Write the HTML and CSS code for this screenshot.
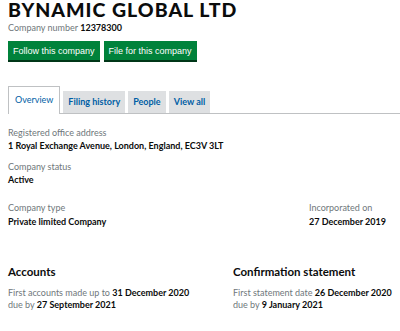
FILE: index.html
```html
<!DOCTYPE html>
<html>
<head>
<meta charset="utf-8">
<link rel="stylesheet" href="styles.css">
</head>
<body>
<div class="page">
  <h1 class="title">BYNAMIC GLOBAL LTD</h1>
  <p class="number">Company number <strong>12378300</strong></p>
  <div class="actions">
    <a class="btn">Follow this company</a>
    <a class="btn">File for this company</a>
  </div>
  <ul class="tabs">
    <li class="tab active">Overview</li>
    <li class="tab">Filing history</li>
    <li class="tab">People</li>
    <li class="tab">View all</li>
  </ul>
  <dl class="field first">
    <dt>Registered office address</dt>
    <dd>1 Royal Exchange Avenue, London, England, EC3V 3LT</dd>
  </dl>
  <dl class="field second">
    <dt>Company status</dt>
    <dd>Active</dd>
  </dl>
  <div class="row">
    <dl class="field type">
      <dt>Company type</dt>
      <dd>Private limited Company</dd>
    </dl>
    <dl class="field">
      <dt>Incorporated on</dt>
      <dd>27 December 2019</dd>
    </dl>
  </div>
  <div class="cols">
    <div class="col">
      <h2>Accounts</h2>
      <p>First accounts made up to <strong>31 December 2020</strong><br>due by <strong>27 September 2021</strong></p>
    </div>
    <div class="col">
      <h2>Confirmation statement</h2>
      <p>First statement date <strong>26 December 2020</strong><br>due by <strong>9 January 2021</strong></p>
    </div>
  </div>
</div>
</body>
</html>
```

FILE: styles.css
```css
* { box-sizing: border-box; }
html, body { margin: 0; padding: 0; background: #fff; overflow: hidden; }
body { font-family: Lato, "Noto Sans", sans-serif; color: #0b0c0c; }
.page { padding: 0 8px; }
.title {
  margin: 0;
  font-size: 19.5px;
  line-height: 20px;
  font-weight: 900;
  letter-spacing: 1px;
}
.number { margin: 2px 0 0; font-size: 9px; color: #6f777b; line-height: 12px; }
.number strong { color: #0b0c0c; }
.actions { display: flex; gap: 4px; margin-top: 7px; }
.btn {
  display: block;
  background: #00823b;
  color: #fff;
  font-family: "Liberation Sans", Arial, sans-serif;
  font-size: 9px;
  line-height: 12px;
  padding: 4px 5px 3px;
  border-bottom: 2px solid #003618;
  white-space: nowrap;
}
.tabs {
  list-style: none;
  margin: 24px -8px 0 0;
  padding: 0;
  display: flex;
  align-items: flex-end;
  gap: 3px;
  border-bottom: 1px solid #bfc1c3;
}
.tab {
  background: #dee0e2;
  color: #005ea5;
  font-size: 9px;
  font-weight: 700;
  line-height: 12px;
  padding: 5px 5px 5px;
}
.tab.active {
  background: #fff;
  border: 1px solid #bfc1c3;
  border-bottom: 0;
  margin-bottom: -1px;
  padding: 7px 6px 8px;
  font-weight: 400;
}
.field { margin: 0; }
.field dt { font-size: 9px; color: #6f777b; line-height: 12px; }
.field dd { margin: 1px 0 0; font-size: 9px; font-weight: 700; line-height: 12px; }
.field.first { margin-top: 13px; }
.field.second { margin-top: 9px; }
.row { display: flex; margin-top: 16px; }
.field.type { flex: 0 0 301px; }
.row dd { margin-top: 2px; }
.cols { display: flex; margin-top: 37px; }
.col { flex: 0 0 225px; }
.col h2 { margin: 0; font-size: 11.5px; font-weight: 700; line-height: 14px; white-space: nowrap; }
.col p { margin: 8px 0 0; font-size: 9px; color: #6f777b; line-height: 12px; white-space: nowrap; }
.col p strong { color: #0b0c0c; }
```
